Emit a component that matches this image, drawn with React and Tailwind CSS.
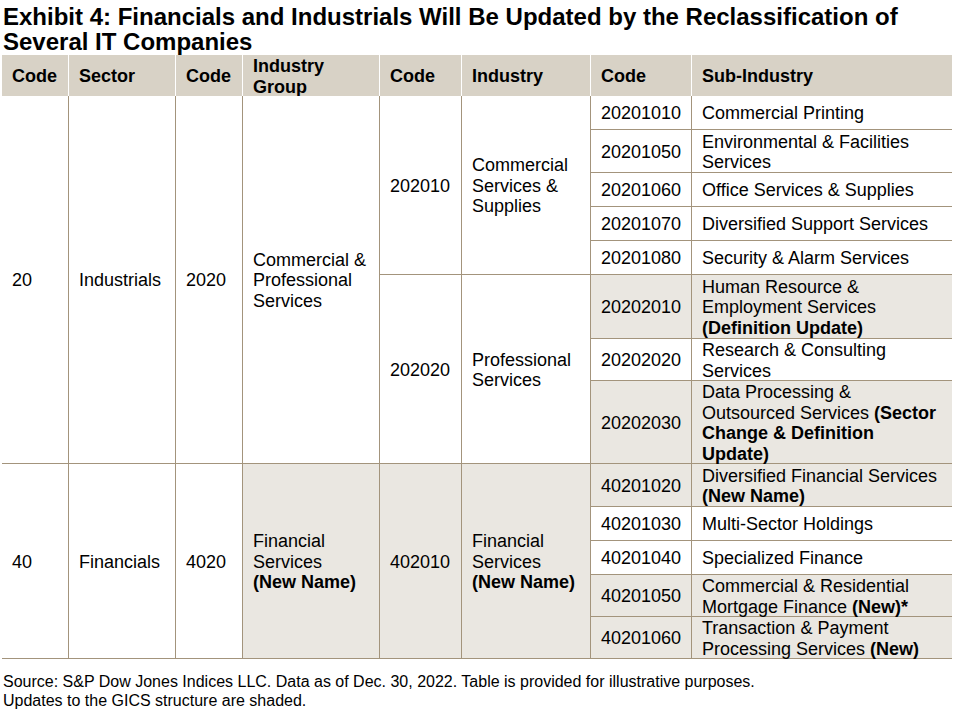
import React from 'react';

// GICS reclassification table (exhibit 4)
const Head = ({ children, last }) => (
  <div
    className={`flex items-center pl-[10px] pr-[4px] pt-[2px] bg-[#d8d2c6] font-bold leading-[20.5px] ${last ? '' : 'border-r border-white'}`}
  >
    <div>{children}</div>
  </div>
);

const Cell = ({ children, span = '', shade, last }) => (
  <div
    className={`flex items-center pl-[10px] pr-[4px] pt-[2px] border-b border-[#a3947c] leading-[20.5px] ${last ? '' : 'border-r'} ${shade ? 'bg-[#eae7e1]' : 'bg-white'} ${span}`}
  >
    <div>{children}</div>
  </div>
);

const subRows = [
  { code: '20201010', name: <>Commercial Printing</> },
  { code: '20201050', name: <>Environmental &amp; Facilities<br />Services</> },
  { code: '20201060', name: <>Office Services &amp; Supplies</> },
  { code: '20201070', name: <>Diversified Support Services</> },
  { code: '20201080', name: <>Security &amp; Alarm Services</> },
];

const proRows = [
  {
    code: '20202010',
    shade: true,
    name: <>Human Resource &amp;<br />Employment Services<br /><b>(Definition Update)</b></>,
  },
  { code: '20202020', name: <>Research &amp; Consulting<br />Services</> },
  {
    code: '20202030',
    shade: true,
    name: <>Data Processing &amp;<br />Outsourced Services <b>(Sector</b><br /><b>Change &amp; Definition</b><br /><b>Update)</b></>,
  },
];

const finRows = [
  { code: '40201020', shade: true, name: <>Diversified Financial Services<br /><b>(New Name)</b></> },
  { code: '40201030', name: <>Multi-Sector Holdings</> },
  { code: '40201040', name: <>Specialized Finance</> },
  { code: '40201050', shade: true, name: <>Commercial &amp; Residential<br />Mortgage Finance <b>(New)*</b></> },
  { code: '40201060', shade: true, name: <>Transaction &amp; Payment<br />Processing Services <b>(New)</b></> },
];

const SubRow = ({ row }) => (
  <>
    <Cell shade={row.shade}>{row.code}</Cell>
    <Cell shade={row.shade} last>{row.name}</Cell>
  </>
);

export default function App() {
  return (
    <div className="w-[958px] h-[714px] bg-white text-black font-['Liberation_Sans',Arial,sans-serif] overflow-hidden">
      <h1 className="font-bold text-[24px] leading-[25px] pl-[3px] pt-[4px] mb-[1px]">
        Exhibit 4: Financials and Industrials Will Be Updated by the Reclassification of Several IT Companies
      </h1>

      <div className="ml-[2px] w-[950px] text-[18px] grid grid-cols-[67px_107px_67px_137px_82px_129px_101px_260px] grid-rows-[41px_34px_43px_34px_34px_34px_64px_42px_83px_43px_34px_34px_42px_42px]">
        <Head>Code</Head>
        <Head>Sector</Head>
        <Head>Code</Head>
        <Head>Industry<br />Group</Head>
        <Head>Code</Head>
        <Head>Industry</Head>
        <Head>Code</Head>
        <Head last>Sub-Industry</Head>

        {/* Industrials */}
        <Cell span="row-span-8">20</Cell>
        <Cell span="row-span-8">Industrials</Cell>
        <Cell span="row-span-8">2020</Cell>
        <Cell span="row-span-8">Commercial &amp;<br />Professional<br />Services</Cell>
        <Cell span="row-span-5">202010</Cell>
        <Cell span="row-span-5">Commercial<br />Services &amp;<br />Supplies</Cell>
        {subRows.map(r => <SubRow key={r.code} row={r} />)}
        <Cell span="row-span-3">202020</Cell>
        <Cell span="row-span-3">Professional<br />Services</Cell>
        {proRows.map(r => <SubRow key={r.code} row={r} />)}

        {/* Financials */}
        <Cell span="row-span-5">40</Cell>
        <Cell span="row-span-5">Financials</Cell>
        <Cell span="row-span-5">4020</Cell>
        <Cell span="row-span-5" shade>Financial<br />Services<br /><b>(New Name)</b></Cell>
        <Cell span="row-span-5" shade>402010</Cell>
        <Cell span="row-span-5" shade>Financial<br />Services<br /><b>(New Name)</b></Cell>
        {finRows.map(r => <SubRow key={r.code} row={r} />)}
      </div>

      <div className="mt-[13px] pl-[3px] text-[16px] leading-[19px]">
        Source: S&amp;P Dow Jones Indices LLC. Data as of Dec. 30, 2022. Table is provided for illustrative purposes.
        <br />
        Updates to the GICS structure are shaded.
      </div>
    </div>
  );
}
